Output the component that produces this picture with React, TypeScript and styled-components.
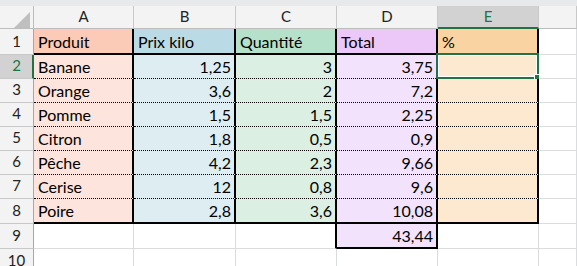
import React from 'react';
import styled, { createGlobalStyle } from 'styled-components';

const GREEN = '#217346';
const GRID = '#dadcdd';

type Line = 'thin' | 'thick' | 'dotted';

const GlobalStyle = createGlobalStyle`
  *, *::before, *::after { box-sizing: border-box; }
  html, body {
    margin: 0;
    padding: 0;
    background: #fff;
  }
  body {
    width: 577px;
    height: 266px;
    overflow: hidden;
    font-family: Lato, "Liberation Sans", sans-serif;
  }
`;

const lineCss = (l: Line) =>
  l === 'thick' ? '2px solid #000' : l === 'dotted' ? '1px dotted #000' : `1px solid ${GRID}`;

const Window = styled.div`
  width: 577px;
  height: 266px;
  overflow: hidden;
  background: #fff;
`;

const TopBar = styled.div`
  height: 6px;
  background: #e7e9eb;
`;

const Sheet = styled.div`
  display: grid;
  grid-template-columns: 34px 100px 102px 101px 101px 101px 1fr;
  grid-template-rows: 23px 26px repeat(6, 24px) 25px 25px 25px;
`;

const Corner = styled.div`
  background: #f3f3f3;
  border-right: 1px solid #bdbdbd;
  border-bottom: 1px solid #bdbdbd;
  position: relative;
`;

const CornerMark = styled.svg`
  position: absolute;
  left: 13px;
  top: 4px;
`;

const HeadCell = styled.div<{ $selected?: boolean }>`
  display: flex;
  align-items: flex-end;
  justify-content: center;
  padding-bottom: ${p => (p.$selected ? 3 : 4)}px;
  background: ${p => (p.$selected ? '#d2d2d2' : '#f3f3f3')};
  border-right: 1px solid #c8c8c8;
  border-bottom: ${p => (p.$selected ? `2px solid ${GREEN}` : '1px solid #bdbdbd')};
  color: ${p => (p.$selected ? GREEN : '#222')};
  font-size: 15px;
  line-height: 1;
`;

const RowHead = styled.div<{ $selected?: boolean }>`
  display: flex;
  align-items: flex-end;
  justify-content: center;
  padding-bottom: 5px;
  padding-left: ${p => (p.$selected ? 1 : 0)}px;
  background: ${p => (p.$selected ? '#d2d2d2' : '#f3f3f3')};
  border-right: ${p => (p.$selected ? `2px solid ${GREEN}` : '1px solid #a8a8a8')};
  border-bottom: 1px solid #c8c8c8;
  color: ${p => (p.$selected ? GREEN : '#222')};
  font-size: 15px;
  line-height: 1;
`;

const Cell = styled.div<{ $bg?: string; $num?: boolean; $right: Line; $bottom: Line }>`
  position: relative;
  display: flex;
  align-items: flex-end;
  justify-content: ${p => (p.$num ? 'flex-end' : 'flex-start')};
  padding: 0 3px 3px 4px;
  background: ${p => p.$bg || '#fff'};
  border-right: ${p => lineCss(p.$right)};
  border-bottom: ${p => lineCss(p.$bottom)};
  color: #000;
  font-size: 16px;
  line-height: 1;
  white-space: nowrap;
`;

const Selection = styled.div`
  position: absolute;
  left: -2px;
  top: -2px;
  right: -2px;
  bottom: -1px;
  border: 2px solid ${GREEN};
  box-shadow: inset 0 0 0 1px #fff;
  pointer-events: none;
`;

const FillHandle = styled.div`
  position: absolute;
  right: -4px;
  bottom: -4px;
  width: 7px;
  height: 7px;
  background: ${GREEN};
  border: 1px solid #fff;
`;

// F is wider than the window, so its letter sits off screen
const columns = ['A', 'B', 'C', 'D', 'E', ''];

const headColors = ['#fbcbb7', '#badbe6', '#b5e1ca', '#ecc8f8', '#f9d3a2'];
const bodyColors = ['#fde4dc', '#deedf2', '#dcefe3', '#f3e2fb', '#fde9d0'];

const table: string[][] = [
  ['Produit', 'Prix kilo', 'Quantité', 'Total', '%'],
  ['Banane', '1,25', '3', '3,75', ''],
  ['Orange', '3,6', '2', '7,2', ''],
  ['Pomme', '1,5', '1,5', '2,25', ''],
  ['Citron', '1,8', '0,5', '0,9', ''],
  ['Pêche', '4,2', '2,3', '9,66', ''],
  ['Cerise', '12', '0,8', '9,6', ''],
  ['Poire', '2,8', '3,6', '10,08', ''],
];

const App = () => {
  return (
    <Window>
      <GlobalStyle />
      <TopBar />
      <Sheet>
        <Corner>
          <CornerMark width="18" height="18" viewBox="0 0 18 18">
            <polygon points="17,2 17,18 1,18" fill="#bfbfbf" />
          </CornerMark>
        </Corner>
        {columns.map((c, i) => (
          <HeadCell key={i} $selected={c === 'E'}>
            {c}
          </HeadCell>
        ))}

        {table.map((row, r) => (
          <React.Fragment key={r}>
            <RowHead $selected={r === 1}>{r + 1}</RowHead>
            {row.map((value, c) => {
              const isHead = r === 0;
              const bottom: Line = isHead || r === table.length - 1 ? 'thick' : 'dotted';
              return (
                <Cell
                  key={c}
                  $bg={isHead ? headColors[c] : bodyColors[c]}
                  $num={!isHead && c > 0}
                  $right="thick"
                  $bottom={bottom}
                >
                  {value}
                  {r === 1 && c === 4 && (
                    <Selection>
                      <FillHandle />
                    </Selection>
                  )}
                </Cell>
              );
            })}
            <Cell $right="thin" $bottom="thin" />
          </React.Fragment>
        ))}

        <RowHead>9</RowHead>
        <Cell $right="thin" $bottom="thin" />
        <Cell $right="thin" $bottom="thin" />
        <Cell $right="thick" $bottom="thin" />
        <Cell $bg={bodyColors[3]} $num $right="thick" $bottom="thick">
          43,44
        </Cell>
        <Cell $right="thin" $bottom="thin" />
        <Cell $right="thin" $bottom="thin" />

        <RowHead>10</RowHead>
        {columns.map((c, i) => (
          <Cell key={i} $right="thin" $bottom="thin" />
        ))}
      </Sheet>
    </Window>
  );
};

export default App;
